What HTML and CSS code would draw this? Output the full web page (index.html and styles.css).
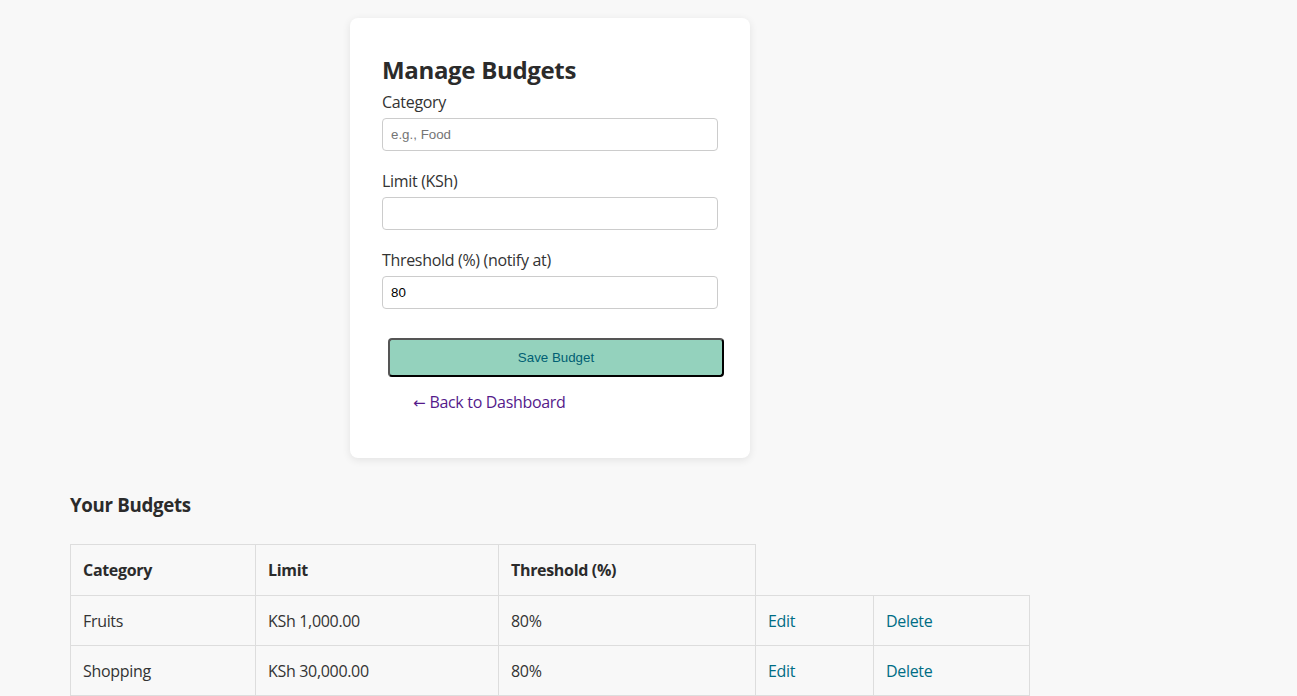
FILE: index.html
```html
<!DOCTYPE html>
<html lang="en">
<head>
<meta charset="utf-8">
<title>Manage Budgets</title>
<link rel="stylesheet" href="styles.css">
</head>
<body>
<main class="page">
  <section class="card">
    <h2 class="card-title">Manage Budgets</h2>
    <form class="budget-form">
      <label class="field-label" for="category">Category</label>
      <input class="field-input" id="category" type="text" placeholder="e.g., Food">
      <label class="field-label" for="limit">Limit (KSh)</label>
      <input class="field-input" id="limit" type="number">
      <label class="field-label" for="threshold">Threshold (%) (notify at)</label>
      <input class="field-input" id="threshold" type="number" value="80">
      <button class="save-btn" type="button">Save Budget</button>
    </form>
    <p class="back-row"><a class="back-link" href="#"><span class="arrow">←</span> Back to Dashboard</a></p>
  </section>

  <h3 class="list-title">Your Budgets</h3>
  <table class="budget-table">
    <thead>
      <tr>
        <th class="c1">Category</th>
        <th class="c2">Limit</th>
        <th class="c3">Threshold (%)</th>
      </tr>
    </thead>
    <tbody>
      <tr>
        <td>Fruits</td>
        <td>KSh 1,000.00</td>
        <td>80%</td>
        <td class="c4"><a class="action" href="#">Edit</a></td>
        <td class="c5"><a class="action" href="#">Delete</a></td>
      </tr>
      <tr>
        <td>Shopping</td>
        <td>KSh 30,000.00</td>
        <td>80%</td>
        <td class="c4"><a class="action" href="#">Edit</a></td>
        <td class="c5"><a class="action" href="#">Delete</a></td>
      </tr>
    </tbody>
  </table>
</main>
</body>
</html>
```

FILE: styles.css
```css
html, body {
  background: #f8f8f8;
}
body {
  margin: 8px;
  font-family: "Open Sans", "Noto Sans", sans-serif;
  font-size: 16px;
  letter-spacing: -0.02em;
  color: #333;
}
.page {
  width: 960px;
  padding: 10px 0 0 62px;
}
.card {
  width: 400px;
  box-sizing: border-box;
  margin: 0 auto;
  background: #fff;
  border-radius: 8px;
  box-shadow: 0 2px 8px rgba(0, 0, 0, 0.09);
  padding: 32px 32px 28px;
}
.card-title {
  margin: 4px 0 5px;
  font-size: 24px;
  line-height: 32px;
  font-weight: 700;
  color: #2b2b2b;
}
.budget-form {
  display: flex;
  flex-direction: column;
}
.field-label {
  display: block;
  line-height: 22px;
  margin-bottom: 5px;
}
.field-input {
  box-sizing: border-box;
  width: 336px;
  height: 33px;
  margin: 0 0 19px;
  padding: 0 8px;
  border: 1px solid #ccc;
  border-radius: 4px;
  background: #fff;
  font-family: "Liberation Sans", Arial, sans-serif;
  font-size: 13.33px;
  letter-spacing: 0;
  color: #000;
}
.field-input::placeholder {
  color: #757575;
}
.field-input::-webkit-outer-spin-button,
.field-input::-webkit-inner-spin-button {
  -webkit-appearance: none;
  margin: 0;
}
.field-input[type=number] {
  -moz-appearance: textfield;
}
.save-btn {
  box-sizing: border-box;
  width: 336px;
  height: 39px;
  margin: 10px 0 0 6px;
  background: #94d2bd;
  border: 2px solid;
  border-color: #555 #000 #000 #555;
  border-radius: 4px;
  color: #005f73;
  font-family: "Liberation Sans", Arial, sans-serif;
  font-size: 13.33px;
  letter-spacing: 0;
}
.back-row {
  margin: 14px 0 16px;
  padding-left: 31px;
  line-height: 22px;
}
.back-link {
  color: #551a8b;
  text-decoration: none;
}
.arrow {
  font-family: "DejaVu Sans", sans-serif;
  font-size: 15px;
  letter-spacing: 0;
}
.list-title {
  margin: 34px 0 27px;
  font-size: 18.72px;
  line-height: 25px;
  font-weight: 700;
  color: #2b2b2b;
}
.budget-table {
  width: 960px;
  border-collapse: collapse;
}
.budget-table th,
.budget-table td {
  border: 1px solid #ddd;
  padding: 15px 12px 13px;
  line-height: 21px;
  text-align: left;
}
.budget-table th {
  padding-bottom: 14px;
  font-weight: 700;
  color: #2b2b2b;
}
.c1 { width: 160px; }
.c2 { width: 218px; }
.c3 { width: 232px; }
.c4 { width: 93px; }
.c5 { width: 131px; }
.action {
  color: #006d85;
  text-decoration: none;
}
```
